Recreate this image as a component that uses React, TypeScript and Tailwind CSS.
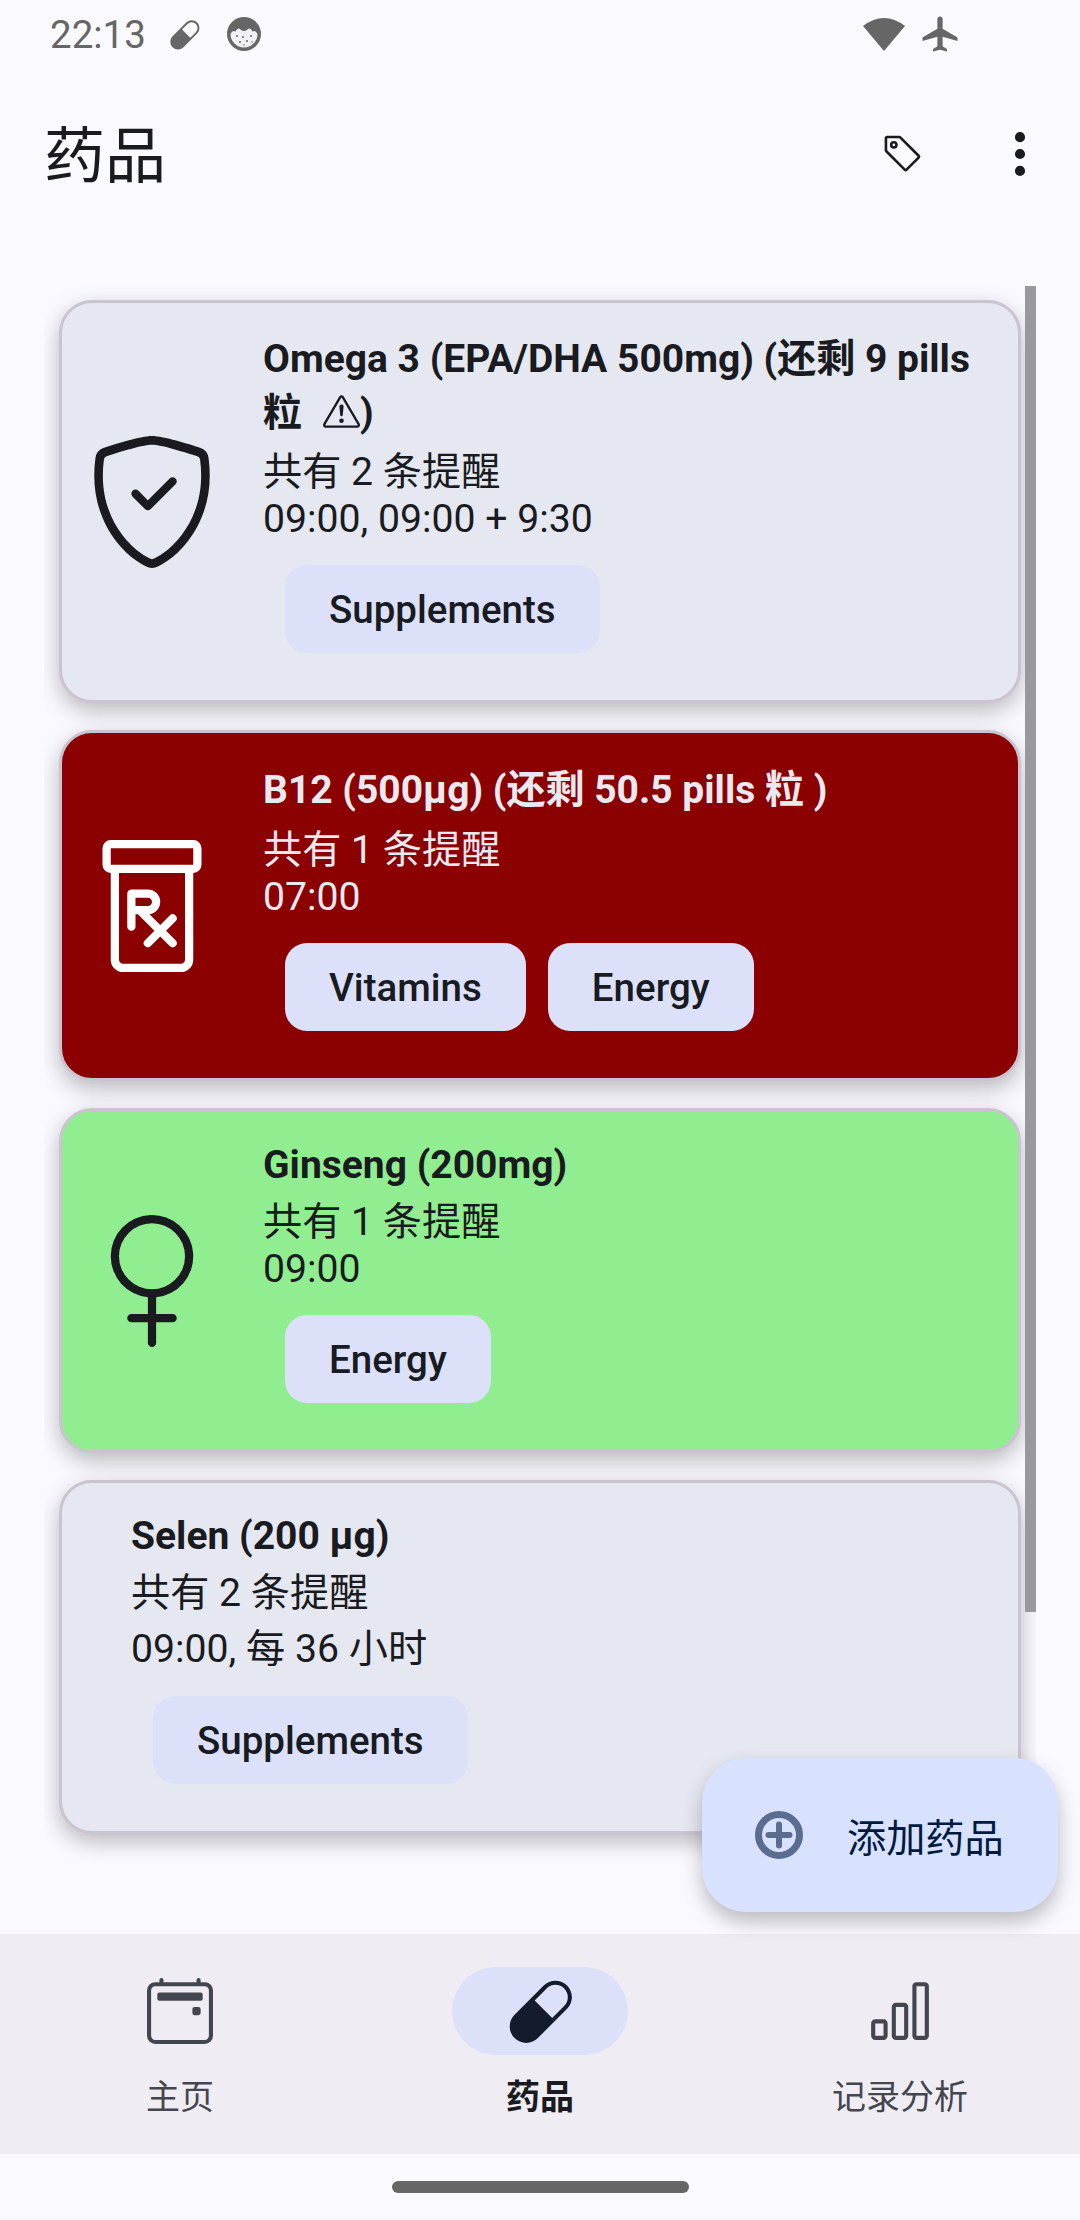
import type { ReactNode } from "react";
import {
  BsBarChart,
  BsCalendar2Event,
  BsCapsule,
  BsExclamationTriangle,
  BsGenderFemale,
  BsPrescription,
  BsShieldCheck,
  BsTag,
  BsThreeDotsVertical,
} from "react-icons/bs";
import { MdAirplanemodeActive } from "react-icons/md";

const font = "font-['Roboto','Noto_Sans_CJK_SC',sans-serif]";

const Chip = ({ label }: { label: string }) => (
  <span className="flex h-[88px] items-center rounded-[22px] bg-[#dce1f9] px-[44px] text-[38.5px] font-medium leading-[normal] text-[#191b23]">
    {label}
  </span>
);

const StatusBar = () => (
  <div className="flex h-[66px] shrink-0 items-center pl-[50px] pr-[122px] pt-[2px] text-[#666666]">
    <span className="text-[38.5px] leading-[normal]">22:13</span>
    <BsCapsule size={31} className="ml-[23px]" />
    <svg viewBox="0 0 34 34" className="ml-[27px] h-[34px] w-[34px]">
      <circle cx="17" cy="17" r="17" fill="#666666" />
      <path
        d="M3.5 17 Q5.5 12.5 8.5 14.5 Q11 9.5 14 13 Q17 15 20 13 Q23 9.5 25.5 14.5 Q28.5 12.5 30.5 17 A13.5 13.5 0 0 1 3.5 17Z"
        fill="#f1f0f6"
      />
      <circle cx="10" cy="19" r="1" fill="#666666" />
      <circle cx="16" cy="20" r="1" fill="#666666" />
      <circle cx="24" cy="19" r="1" fill="#666666" />
      <circle cx="13" cy="25" r="1" fill="#666666" />
      <circle cx="20" cy="24" r="1" fill="#666666" />
      <circle cx="17" cy="28" r="0.8" fill="#666666" />
      <circle cx="25" cy="25" r="0.8" fill="#666666" />
    </svg>
    <svg viewBox="0 0 42 34" className="ml-auto h-[34px] w-[42px]">
      <path d="M21 34 L0 9 Q21 -7 42 9 Z" fill="#666666" />
    </svg>
    <MdAirplanemodeActive size={42} className="ml-[14px] mr-[-3px]" />
  </div>
);

const AppBar = () => (
  <div className="flex h-[176px] shrink-0 items-center pl-[44px] pr-[33px] text-[#1a1b20]">
    <h1 className="pb-[5px] text-[61px] leading-[normal]">药品</h1>
    <BsTag size={42} className="ml-auto" />
    <BsThreeDotsVertical size={54} className="ml-[69px] text-[#1a1b20]" />
  </div>
);

type CardProps = {
  icon?: ReactNode;
  title: ReactNode;
  titleClass: string;
  count: string;
  times: string;
  chips: string[];
  className: string;
};

const MedCard = ({ icon, title, titleClass, count, times, chips, className }: CardProps) => (
  <div
    className={`flex items-center rounded-[33px] border-[3px] border-[#cac4d0] shadow-[0_8px_22px_rgba(0,0,0,0.26)] ${
      icon ? "gap-[45px] pl-[24px]" : "pl-[69px]"
    } ${className}`}
  >
    {icon}
    <div className="min-w-0 flex-1 pb-[47px] pr-[30px] pt-[29px]">
      <div className={`text-[39px] font-bold ${titleClass}`}>{title}</div>
      <div className="text-[39.2px] leading-[normal]">{count}</div>
      <div className="text-[39.2px] leading-[normal]">{times}</div>
      <div className="ml-[22px] mt-[23px] flex gap-[22px]">
        {chips.map((c) => (
          <Chip key={c} label={c} />
        ))}
      </div>
    </div>
  </div>
);

const MedList = () => (
  <div className="relative mx-[44px] flex-1 overflow-hidden">
    <div className="flex flex-col gap-[27px] pl-[15px] pr-[15px] pt-[14px]">
      <MedCard
        className="bg-[#e5e8f0] text-[#1a1b20]"
        icon={<BsShieldCheck size={132} className="shrink-0 text-[#1a1b20]" />}
        titleClass="leading-[54px]"
        title={
          <>
            Omega 3 (EPA/DHA 500mg) (还剩 9 pills 粒
            <BsExclamationTriangle size={37} className="ml-[21px] inline align-[-4px]" />)
          </>
        }
        count="共有 2 条提醒"
        times="09:00, 09:00 + 9:30"
        chips={["Supplements"]}
      />
      <MedCard
        className="bg-[#8b0000] text-[#e8e9f1]"
        icon={<BsPrescription size={132} className="shrink-0 text-white" />}
        titleClass="leading-[56px]"
        title="B12 (500µg) (还剩 50.5 pills 粒 )"
        count="共有 1 条提醒"
        times="07:00"
        chips={["Vitamins", "Energy"]}
      />
      <MedCard
        className="bg-[#90ee90] text-[#1a1b20]"
        icon={<BsGenderFemale size={132} className="shrink-0 text-[#1a1b20]" />}
        titleClass="leading-[50px]"
        title="Ginseng (200mg)"
        count="共有 1 条提醒"
        times="09:00"
        chips={["Energy"]}
      />
      <MedCard
        className="bg-[#e5e8f0] text-[#1a1b20]"
        titleClass="leading-[49px]"
        title="Selen (200 µg)"
        count="共有 2 条提醒"
        times="09:00, 每 36 小时"
        chips={["Supplements"]}
      />
    </div>
    <div className="absolute right-0 top-0 h-[1326px] w-[11px] bg-[#98989e]" />
  </div>
);

const AddButton = () => (
  <button className="absolute left-[702px] top-[1758px] flex h-[154px] w-[356px] items-center rounded-[44px] bg-[#d8e2ff] pl-[53px] text-[39.2px] leading-[normal] text-[#001a41] shadow-[0_10px_20px_rgba(0,0,0,0.25)]">
    <svg viewBox="0 0 48 48" className="h-[48px] w-[48px]">
      <circle cx="24" cy="24" r="20.5" fill="none" stroke="#5a6c90" strokeWidth="7" />
      <path d="M24 13.5V34.5M13.5 24H34.5" stroke="#5a6c90" strokeWidth="6" strokeLinecap="round" />
    </svg>
    <span className="ml-[44px]">添加药品</span>
  </button>
);

const NavItem = ({ icon, label, active }: { icon: ReactNode; label: string; active?: boolean }) => (
  <div className="flex flex-1 flex-col items-center pt-[33px]">
    <div
      className={`flex h-[88px] w-[176px] items-center justify-center rounded-[44px] ${
        active ? "bg-[#dce1f9] text-[#141b2c]" : "text-[#44464f]"
      }`}
    >
      {icon}
    </div>
    <span
      className={`mt-[15px] text-[34px] leading-[normal] ${
        active ? "font-bold text-[#1a1b20]" : "text-[#44464f]"
      }`}
    >
      {label}
    </span>
  </div>
);

export default function App() {
  return (
    <div className={`relative flex h-[2220px] w-[1080px] flex-col overflow-hidden bg-[#faf9ff] ${font}`}>
      <StatusBar />
      <AppBar />
      <div className="flex h-[44px] shrink-0" />
      <MedList />
      <AddButton />
      <nav className="flex h-[220px] shrink-0 bg-[#efedf3]">
        <NavItem icon={<BsCalendar2Event size={66} />} label="主页" />
        <NavItem icon={<BsCapsule size={66} />} label="药品" active />
        <NavItem icon={<BsBarChart size={66} />} label="记录分析" />
      </nav>
      <div className="flex h-[66px] shrink-0 items-center justify-center">
        <div className="h-[12px] w-[297px] rounded-full bg-[#666666]" />
      </div>
    </div>
  );
}
